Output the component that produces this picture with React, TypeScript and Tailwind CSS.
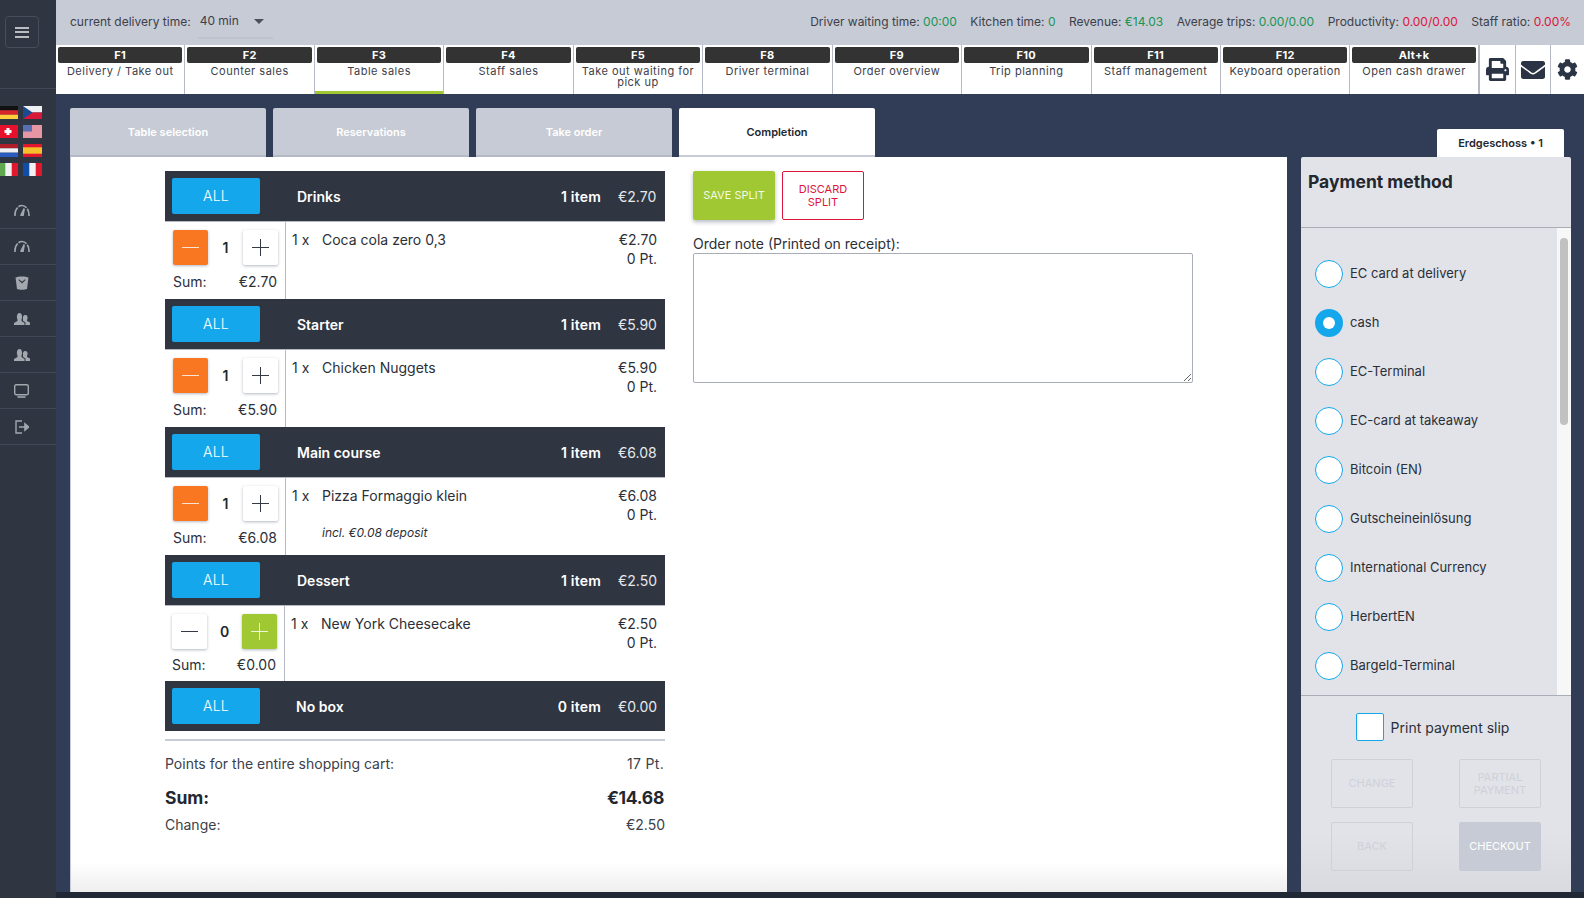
import { FaPrint, FaEnvelope, FaCog } from "react-icons/fa";

const navItems = [
  ["F1", "Delivery / Take out"],
  ["F2", "Counter sales"],
  ["F3", "Table sales"],
  ["F4", "Staff sales"],
  ["F5", "Take out waiting for pick up"],
  ["F8", "Driver terminal"],
  ["F9", "Order overview"],
  ["F10", "Trip planning"],
  ["F11", "Staff management"],
  ["F12", "Keyboard operation"],
  ["Alt+k", "Open cash drawer"],
];

const payments = [
  "EC card at delivery",
  "cash",
  "EC-Terminal",
  "EC-card at takeaway",
  "Bitcoin (EN)",
  "Gutscheineinlösung",
  "International Currency",
  "HerbertEN",
  "Bargeld-Terminal",
];

const GaugeIcon = () => (
  <svg width="16" height="12" viewBox="0 0 16 12" fill="none" stroke="#a3a7ae" strokeWidth="1.6" className="mt-[-2px]">
    <path d="M1 12 C0.6 6 4 1.5 8 1.5 C12 1.5 15.4 6 15 12" strokeDasharray="9 1.2 9 1.2 9" />
    <path d="M7 11 L10.2 4.5 L9 11.6 Z" fill="#a3a7ae" />
  </svg>
);

const BagIcon = () => (
  <svg width="14" height="14" viewBox="0 0 14 14" fill="#a3a7ae">
    <path d="M0.500 1.500 C3 0 11 0 13.500 1.500 L12 13 C10 14 4 14 2 13 Z M3.500 4 L7 7.500 L10.500 4 L10 3.300 L7 5.800 L4 3.300 Z" fillRule="evenodd" />
  </svg>
);

const UsersIcon = () => (
  <svg width="16" height="14" viewBox="0 0 16 14" fill="#a3a7ae">
    <path d="M0 13 V11 L3.500 9 V7.500 C2.500 6 2.500 1 5.500 1 C8.500 1 8.500 6 7.500 7.500 V9 L10.500 11 V13 Z" />
    <path d="M9 7 C8.800 5 9 3 11.500 3 C14 3 14 6.500 13 8 V9 L16 10.500 V13 H11.500 V10.500 L9 8.800 Z" />
  </svg>
);

const MonitorIcon = () => (
  <svg width="15" height="14" viewBox="0 0 15 14" fill="none" stroke="#a3a7ae" strokeWidth="1.4">
    <rect x="0.700" y="0.700" width="13.600" height="10" rx="1.500" />
    <path d="M3.500 13 H11.500" strokeWidth="1.600" />
  </svg>
);

const ExitIcon = () => (
  <svg width="14" height="14" viewBox="0 0 14 14" fill="none" stroke="#a3a7ae" strokeWidth="1.4">
    <path d="M7 1 H1 V13 H7" />
    <path d="M4 7 H10 M10 4 V10 L13.500 7 Z" fill="#a3a7ae" strokeWidth="1.600" />
  </svg>
);

const Flag = ({ children }: { children: React.ReactNode }) => (
  <svg width="19" height="13" viewBox="0 0 19 13" className="block">
    {children}
  </svg>
);

const flags = [
  <Flag key="de">
    <rect width="19" height="4.300" fill="#111" />
    <rect y="4.300" width="19" height="4.400" fill="#d8232a" />
    <rect y="8.700" width="19" height="4.300" fill="#fcce3c" />
  </Flag>,
  <Flag key="cz">
    <rect width="19" height="6.500" fill="#eef0f3" />
    <rect y="6.500" width="19" height="6.500" fill="#d8173a" />
    <path d="M0 0 L9.500 6.500 L0 13 Z" fill="#1c4a8e" />
  </Flag>,
  <Flag key="ch">
    <rect width="19" height="13" fill="#e8112d" />
    <path d="M7.500 3 H10.500 V5 H12.500 V8 H10.500 V10 H7.500 V8 H5.500 V5 H7.500 Z" fill="#fff" />
  </Flag>,
  <Flag key="us">
    <rect width="19" height="13" fill="#f1f1f4" />
    <path d="M0 1 H19 M0 3 H19 M0 5 H19 M0 7 H19 M0 9 H19 M0 11 H19 M0 13 H19" stroke="#dc3d52" strokeWidth="1" />
    <rect width="9" height="6.500" fill="#5a6fb0" />
  </Flag>,
  <Flag key="nl">
    <rect width="19" height="4.300" fill="#ae1c28" />
    <rect y="4.300" width="19" height="4.400" fill="#f1f1f4" />
    <rect y="8.700" width="19" height="4.300" fill="#2a5bc0" />
  </Flag>,
  <Flag key="es">
    <rect width="19" height="13" fill="#e0182d" />
    <rect y="3.300" width="19" height="6.400" fill="#f6c02c" />
  </Flag>,
  <Flag key="it">
    <rect width="19" height="13" fill="#f1f1f4" />
    <rect width="6.300" height="13" fill="#5fa84f" />
    <rect x="12.700" width="6.300" height="13" fill="#e0182d" />
  </Flag>,
  <Flag key="fr">
    <rect width="19" height="13" fill="#f1f1f4" />
    <rect width="6.300" height="13" fill="#0f4ea8" />
    <rect x="12.700" width="6.300" height="13" fill="#e0182d" />
  </Flag>,
];

const Sidebar = () => (
  <aside className="w-[56px] shrink-0 bg-[#2f3541] flex flex-col overflow-hidden">
    <div className="h-[89px] border-b border-[#414754] pt-[16px] pl-[5px] shrink-0">
      <div className="w-[34px] h-[32px] rounded border border-[#474d5a] flex items-center justify-center">
        <div className="w-[14px] flex flex-col gap-[2.500px]">
          <div className="h-[2px] bg-[#b9bcc3]" />
          <div className="h-[2px] bg-[#b9bcc3]" />
          <div className="h-[2px] bg-[#b9bcc3]" />
        </div>
      </div>
    </div>
    <div className="grid grid-cols-[19px_19px] content-start gap-x-[5px] gap-y-[6px] ml-[-1px] mt-[17px] h-[88px] shrink-0">{flags}</div>
    <div className="flex flex-col mt-[-1px]">
      {[<GaugeIcon />, <GaugeIcon />, <BagIcon />, <UsersIcon />, <UsersIcon />, <MonitorIcon />, <ExitIcon />].map((icon, i) => (
        <div key={i} className="h-[36px] border-b border-[#414754] flex items-center justify-center pr-[13px]">
          {icon}
        </div>
      ))}
    </div>
  </aside>
);

const TopBar = () => (
  <div className="h-[45px] bg-[#c7cbd5] flex items-center pl-[14px] pr-[13px] text-[12px] text-[#3c404a] shrink-0">
    <span className="mt-[-1px]">current delivery time:</span>
    <div className="ml-[7px] w-[75px] h-[35px] mt-[-2px] border-b-2 border-[#bec2cc] flex items-center pl-[2px] relative">
      <span>40 min</span>
      <div className="absolute left-[56px] top-[15px] w-0 h-0 border-x-[5.500px] border-x-transparent border-t-[5.500px] border-t-[#4b5059]" />
    </div>
    <div className="ml-auto flex gap-[13.5px] mt-[-2px]">
      <span>Driver waiting time: <span className="text-[#1b9454]">00:00</span></span>
      <span>Kitchen time: <span className="text-[#1b9454]">0</span></span>
      <span>Revenue: <span className="text-[#1b9454]">€14.03</span></span>
      <span>Average trips: <span className="text-[#1b9454]">0.00/0.00</span></span>
      <span>Productivity: <span className="text-[#dc143c]">0.00/0.00</span></span>
      <span>Staff ratio: <span className="text-[#dc143c]">0.00%</span></span>
    </div>
  </div>
);

const NavBar = () => (
  <div className="h-[49px] bg-white flex shrink-0">
    {navItems.map(([key, label], i) => (
      <div key={key} className={`w-[129.45px] shrink-0 border-r border-[#b5b9c6] px-[2px] pt-[2px] relative ${i === 10 ? "border-r-2" : ""}`}>
        <div className="h-[16px] bg-[#333333] rounded-[2px] text-white text-[11px] font-bold leading-[16px] text-center tracking-[0.3px]">{key}</div>
        <div className="text-[11px] leading-[11px] text-[#3c404a] text-center tracking-[0.5px] mt-[3px] px-[3px]">{label}</div>
        {key === "F3" && <div className="absolute left-0 right-0 bottom-0 h-[3px] bg-[#a0c832]" />}
      </div>
    ))}
    <div className="w-[36px] border-r border-[#b5b9c6] flex items-center justify-center text-[#2b3444] shrink-0"><FaPrint size={23} /></div>
    <div className="w-[35px] border-r border-[#b5b9c6] flex items-center justify-center text-[#2b3444] shrink-0"><FaEnvelope size={24} /></div>
    <div className="w-[33px] shrink-0 flex items-center justify-center text-[#2b3444]"><FaCog size={21} /></div>
  </div>
);

const Stepper = ({ qty, sum, active }: { qty: number; sum: string; active: "minus" | "plus" }) => (
  <div className={`shrink-0 border-r border-[#b5b9c6] pt-[8px] ${active === "plus" ? "w-[120px] pl-[7px] pr-[7px]" : "w-[121px] pl-[8px] pr-[7px]"}`}>
    <div className="flex items-center justify-between">
      <div className={`w-[35px] h-[35px] rounded-[2px] shadow-[0_1px_3px_rgba(40,50,80,0.35)] flex items-center justify-center ${active === "minus" ? "bg-[#f97720]" : "bg-white"}`}>
        <div className={`w-[17px] h-[1.500px] ${active === "minus" ? "bg-[#fbe3d0]" : "bg-[#343a45]"}`} />
      </div>
      <span className="text-[14px] font-semibold text-[#23272f]">{qty}</span>
      <div className={`w-[35px] h-[35px] rounded-[2px] shadow-[0_1px_3px_rgba(40,50,80,0.35)] flex items-center justify-center relative ${active === "plus" ? "bg-[#a0c832]" : "bg-white"}`}>
        <div className={`w-[17px] h-[1.500px] ${active === "plus" ? "bg-[#eef5d8]" : "bg-[#343a45]"}`} />
        <div className={`absolute w-[1.500px] h-[17px] ${active === "plus" ? "bg-[#eef5d8]" : "bg-[#343a45]"}`} />
      </div>
    </div>
    <div className={`flex justify-between text-[14px] leading-[20px] text-[#2b2f38] pr-[1px] ${active === "plus" ? "mt-[6px]" : "mt-[7px]"}`}>
      <span>Sum:</span>
      <span>{sum}</span>
    </div>
  </div>
);

const GroupHeader = ({ name, count, total }: { name: string; count: string; total: string }) => (
  <div className="h-[50px] bg-[#2f3541] flex items-center pl-[7px] pr-[9px] text-white text-[14px] shrink-0">
    <div className="w-[88px] h-[36px] rounded-[2px] bg-[#14a7ec] flex items-center justify-center font-light tracking-[0.2px] pb-[2px]">ALL</div>
    <span className={`font-semibold ${name === "No box" ? "ml-[36px]" : "ml-[37px]"}`}>{name}</span>
    <span className="ml-auto font-semibold tracking-[0.2px]">{count}</span>
    <span className="ml-[17px] font-normal w-[38px] text-right text-[#e6e8ec]">{total}</span>
  </div>
);

const OrderRow = ({ qty, sum, active, name, price, note, h }: { qty: number; sum: string; active: "minus" | "plus"; name: string; price: string; note?: string; h: string }) => (
  <div className={`flex ${h} border-t border-[#b5b9c6]`}>
    <Stepper qty={qty} sum={sum} active={active} />
    <div className="flex-1 pl-[6px] pr-[8px] pt-[8px] text-[14px] leading-[19px] text-[#2b2f38]">
      <div className="flex">
        <span className="w-[30px]">1 x</span>
        <div className="flex-1">
          <div>{name}</div>
          {note && <div className="italic text-[12px] mt-[18px]">{note}</div>}
        </div>
        <div className="text-right">
          <div>{price}</div>
          <div>0 Pt.</div>
        </div>
      </div>
    </div>
  </div>
);

const OrderList = () => (
  <div className="w-[500px] shrink-0 ml-[94px] pt-[14px] flex flex-col">
    <GroupHeader name="Drinks" count="1 item" total="€2.70" />
    <OrderRow h="h-[78px]" qty={1} sum="€2.70" active="minus" name="Coca cola zero 0,3" price="€2.70" />
    <GroupHeader name="Starter" count="1 item" total="€5.90" />
    <OrderRow h="h-[78px]" qty={1} sum="€5.90" active="minus" name="Chicken Nuggets" price="€5.90" />
    <GroupHeader name="Main course" count="1 item" total="€6.08" />
    <OrderRow h="h-[78px]" qty={1} sum="€6.08" active="minus" name="Pizza Formaggio klein" price="€6.08" note="incl. €0.08 deposit" />
    <GroupHeader name="Dessert" count="1 item" total="€2.50" />
    <OrderRow h="h-[76px]" qty={0} sum="€0.00" active="plus" name="New York Cheesecake" price="€2.50" />
    <GroupHeader name="No box" count="0 item" total="€0.00" />
    <div className="border-t-2 border-[#c7cbd5] mt-[8px] pt-[13px] text-[14px] text-[#3c404a]">
      <div className="flex justify-between leading-[20px]">
        <span>Points for the entire shopping cart:</span>
        <span className="pr-[1px] tracking-[0.3px]">17 Pt.</span>
      </div>
      <div className="flex justify-between mt-[11px] text-[17.5px] leading-[26px] font-bold text-[#23272f]">
        <span>Sum:</span>
        <span className="pr-[1px] tracking-[-0.3px]">€14.68</span>
      </div>
      <div className="flex justify-between mt-[4px] leading-[20px]">
        <span>Change:</span>
        <span>€2.50</span>
      </div>
    </div>
  </div>
);

const NotePanel = () => (
  <div className="ml-[28px] w-[500px] pt-[14px]">
    <div className="flex gap-[7px] text-[11px] leading-[13px] text-center">
      <button className="w-[82px] h-[49px] rounded-[2px] bg-[#a0c832] text-[#f4f8e6] shadow-[0_2px_4px_rgba(40,50,80,0.35)]">SAVE SPLIT</button>
      <button className="w-[82px] h-[49px] rounded-[2px] border border-[#dc143c] text-[#dc143c]">DISCARD<br />SPLIT</button>
    </div>
    <div className="text-[14px] leading-[20px] text-[#2b2f38] mt-[14px]">Order note (Printed on receipt):</div>
    <textarea className="block w-[500px] h-[130px] mt-[-1px] rounded-[2px] border border-[#a9adb8] bg-white" />
  </div>
);

const PaymentPanel = () => (
  <div className="flex-1 bg-linear-to-b from-[#e1e3e9] from-[92%] to-[#d8dadf] rounded-t-[2px] flex flex-col overflow-hidden">
    <div className="h-[71px] border-b border-[#a9adb8] px-[7px] pt-[14px] text-[17.5px] font-bold text-[#23272f] leading-[22px] shrink-0">Payment method</div>
    <div className="h-[467px] flex shrink-0 overflow-hidden">
      <div className="flex-1 pt-[32px] pl-[14px] flex flex-col gap-[21px]">
        {payments.map((p) => (
          <div key={p} className="flex items-center h-[28px] shrink-0 text-[13px] text-[#2b2f38]">
            {p === "cash" ? (
              <div className="w-[28px] h-[28px] rounded-full bg-[#14a7ec] flex items-center justify-center">
                <div className="w-[12px] h-[12px] rounded-full bg-white" />
              </div>
            ) : (
              <div className="w-[28px] h-[28px] rounded-full bg-white border border-[#14a7ec]" />
            )}
            <span className="ml-[7px]">{p}</span>
          </div>
        ))}
      </div>
      <div className="w-[14px] bg-[#f7f7f7] pt-[10px] pl-[3px] shrink-0">
        <div className="w-[8px] h-[187px] rounded-full bg-[#c1c1c1]" />
      </div>
    </div>
    <div className="flex-1 border-t border-[#a9adb8] flex flex-col">
      <div className="flex items-center justify-center mt-[17px] pr-[7px]">
        <div className="w-[28px] h-[28px] rounded-[2px] bg-white border border-[#14a7ec]" />
        <span className="ml-[7px] text-[14px] text-[#2b2f38]">Print payment slip</span>
      </div>
      <div className="grid grid-cols-[82px_82px] justify-between px-[30px] gap-y-[14px] mt-[18px] text-[11px] leading-[13px] text-center">
        <button className="h-[49px] rounded-[2px] border border-[#ced1d9] text-[#ced1d9]">CHANGE</button>
        <button className="h-[49px] rounded-[2px] border border-[#ced1d9] text-[#ced1d9]">PARTIAL<br />PAYMENT</button>
        <button className="h-[49px] rounded-[2px] border border-[#ced1d9] text-[#ced1d9]">BACK</button>
        <button className="h-[49px] rounded-[2px] bg-[#c7cbd5] text-white">CHECKOUT</button>
      </div>
    </div>
  </div>
);

export default function App() {
  const tabs = ["Table selection", "Reservations", "Take order", "Completion"];
  return (
    <div className="w-[1584px] h-[898px] flex overflow-hidden bg-[#313d56] font-['Inter',sans-serif]">
      <Sidebar />
      <div className="flex-1 flex flex-col min-w-0">
        <TopBar />
        <NavBar />
        <main className="flex-1 flex pl-[14px] pr-[13px] pt-[14px] min-h-0">
          <div className="w-[1217px] flex flex-col shrink-0">
            <div className="flex gap-[7px] h-[49px] shrink-0">
              {tabs.map((t) => (
                <div key={t} className={`w-[196px] rounded-t-[2px] flex items-center justify-center text-[11px] font-semibold pt-[1px] ${t === "Completion" ? "bg-white text-[#23272f] border-b-2 border-[#c7cbd5]" : "bg-[#c7cbd5] text-white border-b-2 border-[#b5b9c6]"}`}>
                  {t}
                </div>
              ))}
            </div>
            <div className="flex-1 bg-linear-to-b from-white from-[96%] to-[#eeeeee] border-l border-[#c7cbd5] flex min-h-0">
              <OrderList />
              <NotePanel />
            </div>
          </div>
          <div className="ml-[14px] w-[270px] flex flex-col shrink-0">
            <div className="h-[28px] mt-[21px] ml-[136px] w-[127px] bg-white rounded-t-[2px] flex items-center justify-center text-[11px] font-semibold text-[#23272f] shrink-0">
              Erdgeschoss • 1
            </div>
            <PaymentPanel />
          </div>
        </main>
        <div className="h-[6px] bg-[#212835] shrink-0" />
      </div>
    </div>
  );
}
